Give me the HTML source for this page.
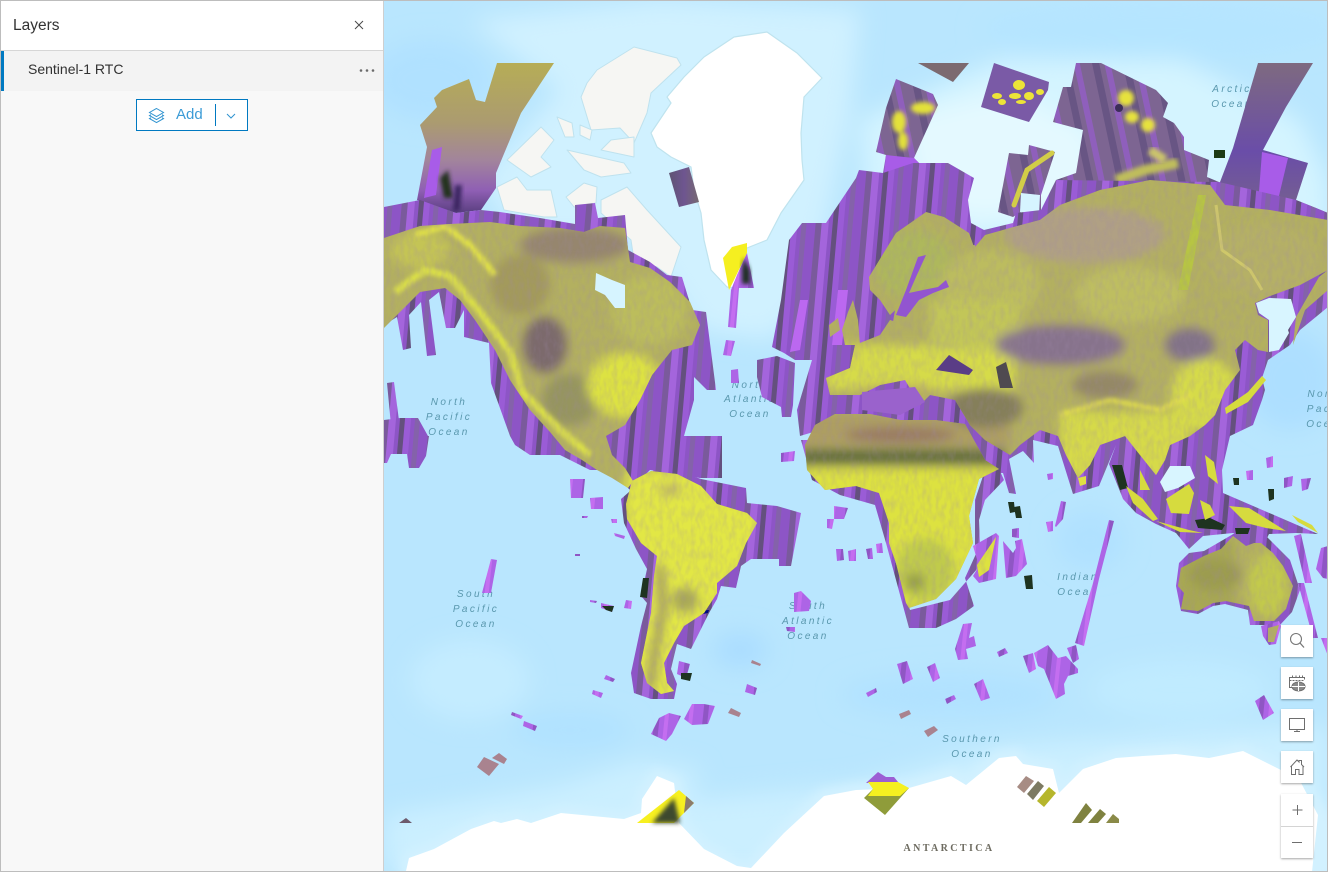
<!DOCTYPE html>
<html><head><meta charset="utf-8"><title>Layers</title>
<style>
*{box-sizing:border-box}
html,body{margin:0;padding:0;width:1328px;height:872px;overflow:hidden;background:#fff;font-family:"Liberation Sans",sans-serif}
#map{position:absolute;left:0;top:0;width:1328px;height:872px;display:block}
#panel{position:absolute;left:0;top:0;width:384px;height:872px;background:#f8f8f8;border-right:1px solid #cfcfcf}
#head{position:absolute;left:0;top:0;width:383px;height:51px;background:#fff;border-bottom:1px solid #d6d6d6}
#title{position:absolute;left:13px;top:17px;font-size:15.5px;line-height:18px;color:#323232}
#row{position:absolute;left:1px;top:51px;width:382px;height:40px;background:#f3f3f3;border-left:3px solid #0079c1}
#rowt{position:absolute;left:24px;top:10px;font-size:14px;line-height:17px;color:#323232}
#add{position:absolute;left:136px;top:99px;width:112px;height:32px;background:#fff;border:1px solid #0079c1}
#addt{position:absolute;left:39px;top:6px;font-size:15px;line-height:17px;color:#3b9bd6}
#div{position:absolute;left:78px;top:4px;width:1px;height:22px;background:#0079c1}
.b{position:absolute;left:1281px;width:32px;background:#fff;box-shadow:0 1px 2px rgba(0,0,0,.35)}
.b svg{position:absolute;left:0;top:0}
#frame{position:absolute;left:0;top:0;width:1328px;height:872px;border:1px solid #bdbdbd;pointer-events:none}
</style></head><body>
<svg id="map" viewBox="0 0 1328 872" xmlns="http://www.w3.org/2000/svg">
<defs>
<filter id="b12" x="-30%" y="-30%" width="160%" height="160%"><feGaussianBlur stdDeviation="12"/></filter>
<filter id="b5" x="-30%" y="-30%" width="160%" height="160%"><feGaussianBlur stdDeviation="5"/></filter>
<filter id="b2" x="-30%" y="-30%" width="160%" height="160%"><feGaussianBlur stdDeviation="2"/></filter>
<pattern id="pp" width="46" height="300" patternUnits="userSpaceOnUse" patternTransform="rotate(5)">
<rect width="46" height="300" fill="#8d55c6"/><rect x="4" width="6" height="300" fill="#7a5a9c"/><rect x="10" width="7" height="300" fill="#a465dc"/><rect x="21" width="5" height="300" fill="#64507e"/><rect x="26" width="6" height="300" fill="#9a5cd6"/><rect x="36" width="5" height="300" fill="#8462aa"/></pattern>
<pattern id="pm" width="24" height="200" patternUnits="userSpaceOnUse" patternTransform="rotate(6)">
<rect width="24" height="200" fill="#ad64e6"/><rect x="6" width="5" height="200" fill="#8f56c4"/><rect x="16" width="4" height="200" fill="#c46ef0"/></pattern>
<pattern id="pd" width="30" height="200" patternUnits="userSpaceOnUse" patternTransform="rotate(-12)">
<rect width="30" height="200" fill="#7d6592"/><rect x="5" width="7" height="200" fill="#685584"/><rect x="17" width="6" height="200" fill="#8f5fbc"/></pattern>
<linearGradient id="alaska" x1="0" y1="0" x2="0" y2="1"><stop offset="0" stop-color="#b6ad56"/><stop offset=".4" stop-color="#ab9b70"/><stop offset=".65" stop-color="#a2849c"/><stop offset=".85" stop-color="#8f5fb4"/><stop offset="1" stop-color="#5a3f80"/></linearGradient>
<linearGradient id="rarc" x1="0" y1="0" x2="0" y2="1"><stop offset="0" stop-color="#7e6a80"/><stop offset=".5" stop-color="#6a4da8"/><stop offset="1" stop-color="#7c6a82"/></linearGradient>
<linearGradient id="greysc" x1="0" y1="0" x2="1" y2="0"><stop offset="0" stop-color="#5f5472"/><stop offset=".5" stop-color="#6e5590"/><stop offset="1" stop-color="#776a70"/></linearGradient>
<clipPath id="land">
<polygon points="384,238 420,226 450,224 490,222 520,226 560,228 584,232 600,226 625,228 630,262 650,268 670,282 690,302 700,325 692,345 672,350 652,375 640,400 625,425 606,436 612,455 625,468 633,481 628,488 612,478 597,470 582,460 565,450 550,432 530,410 510,380 495,350 475,320 460,300 445,288 420,292 400,312 384,328"/>
<polygon points="632,481 651,471 677,474 701,486 717,504 747,513 757,523 746,543 737,566 717,583 717,593 704,613 684,626 674,643 664,663 667,683 674,691 661,694 647,683 641,663 647,633 651,613 654,576 657,556 641,543 627,519 626,504"/>
<polygon points="815,425 835,414 870,414 900,420 935,420 965,424 985,460 999,469 979,479 969,516 973,543 956,579 936,599 909,608 906,603 896,563 889,543 889,523 879,493 856,486 825,490 807,470 805,445"/>
<polygon points="869,277 896,233 926,212 944,217 969,233 974,247 959,253 925,257 915,290 906,300 890,315 880,300 870,290"/>
<polygon points="905,250 975,245 985,340 890,340"/>
<polygon points="925,258 959,255 975,247 985,235 1010,228 1040,220 1060,205 1100,190 1150,180 1210,185 1225,205 1270,210 1328,220 1328,270 1300,285 1270,296 1255,303 1258,315 1268,320 1268,352 1258,350 1245,340 1235,350 1240,370 1225,390 1215,415 1205,425 1190,436 1170,445 1165,460 1156,475 1140,455 1125,436 1100,445 1090,465 1078,478 1066,455 1058,436 1040,430 1020,445 1010,455 985,440 970,425 955,400 930,395 920,405 905,380 880,385 860,395 830,395 826,378 850,368 855,345 880,335 890,320 905,325 915,320 930,325 925,300"/>
<polygon points="842,330 848,312 853,300 858,320 860,345 845,345"/>
<polygon points="829,325 838,318 840,330 830,337"/>
<polygon points="1296,317 1319,277 1328,270 1328,290 1305,310 1293,345"/>
<polygon points="1181,568 1204,556 1221,549 1233,536 1246,546 1254,543 1261,543 1273,553 1283,566 1293,586 1286,609 1274,621 1254,621 1249,606 1226,601 1213,603 1198,611 1181,609 1184,593 1178,586"/>
<polygon points="996,537 989,570 979,577 977,565"/>
<polygon points="1268,628 1279,625 1274,642 1268,642"/>
</clipPath>
<filter id="noise" x="0" y="0" width="100%" height="100%"><feTurbulence type="fractalNoise" baseFrequency=".22 .1" numOctaves="2" seed="4"/><feColorMatrix values="0 0 0 0 .35  0 0 0 0 .25  0 0 0 0 .4  1.6 0 0 0 -.6"/></filter>
</defs>

<!-- ocean -->
<rect x="384" width="944" height="872" fill="#b9e6fe"/>
<g filter="url(#b12)">
<polygon points="470,20 660,0 860,10 850,110 810,300 770,340 700,330 640,240 520,240 480,180 560,90" fill="#d0f1ff"/>
<polygon points="860,120 1000,60 1180,60 1300,120 1328,180 1328,240 1000,240 870,260" fill="#d4f4ff"/>
<polygon points="905,115 1010,90 1090,130 1100,200 980,220 920,200" fill="#e4f9ff"/>
<polygon points="384,815 560,785 640,760 700,770 690,800 856,785 1000,745 1328,725 1328,872 384,872" fill="#cbefff"/>
<ellipse cx="430" cy="80" rx="60" ry="40" fill="#b0e1ff"/>
<ellipse cx="1160" cy="30" rx="180" ry="30" fill="#b5e5ff"/>
<ellipse cx="1290" cy="380" rx="45" ry="50" fill="#addfff"/>
<ellipse cx="740" cy="650" rx="28" ry="18" fill="#aaddff"/>
<ellipse cx="1090" cy="540" rx="35" ry="30" fill="#b0e1ff"/>
<ellipse cx="570" cy="730" rx="60" ry="18" fill="#b0e2ff"/>
<ellipse cx="950" cy="695" rx="110" ry="22" fill="#b1e2ff"/>
<ellipse cx="1180" cy="690" rx="90" ry="30" fill="#c0ebff"/>
<ellipse cx="470" cy="680" rx="60" ry="40" fill="#c4ecff"/>
</g>
<!-- ice -->
<g fill="#f6f6f3" stroke="#bfe2ee" stroke-width="1" stroke-linejoin="round">
<polygon points="597,70 634,47 677,58 681,65 651,93 647,113 634,143 620,128 591,130 581,97 587,83"/>
<polygon points="507,160 541,127 554,140 541,157 551,167 531,177"/>
<polygon points="497,187 517,177 527,190 551,190 557,217 544,217 504,210"/>
<polygon points="567,150 624,163 631,173 601,177 584,170"/>
<polygon points="601,200 627,187 647,210 681,247 671,277 657,267 634,260 631,240 601,213"/>
<polygon points="566,197 584,183 597,187 596,203 574,207"/>
<polygon points="601,150 634,157 634,137 611,140"/>
<polygon points="557,117 572,123 574,137 565,137"/>
<polygon points="580,125 592,130 590,140 580,135"/>
</g>
<polygon fill="#fff" stroke="#bfe3ee" stroke-width="1.2" stroke-linejoin="round" points="651,133 671,103 667,97 684,77 704,57 734,37 767,32 797,53 822,78 804,97 801,133 802,160 804,180 781,213 767,240 747,248 737,288 727,287 711,270 704,240 701,213 694,190 691,167 671,157 657,147"/>
<!-- Antarctica -->
<polygon fill="#d2f1ff" stroke="#d2f1ff" stroke-width="14" stroke-linejoin="round" filter="url(#b5)" points="406,871 409,858 434,849 471,829 494,821 501,823 517,819 531,823 561,813 624,819 641,813 642,799 657,776 674,783 679,823 704,849 737,866 751,868 784,833 824,796 856,790 909,788 951,776 966,785 999,758 1016,756 1023,764 1053,769 1059,793 1083,769 1116,758 1143,756 1176,754 1209,758 1243,751 1273,766 1299,779 1328,823 1328,872"/>
<polygon fill="#fff" points="406,871 409,858 434,849 471,829 494,821 501,823 517,819 531,823 561,813 624,819 641,813 642,799 657,776 674,783 679,823 704,849 737,866 751,868 784,833 824,796 856,790 909,788 951,776 966,785 999,758 1016,756 1023,764 1053,769 1059,793 1083,769 1116,758 1143,756 1176,754 1209,758 1243,751 1273,766 1299,779 1318,815 1312,872"/>
<!-- labels -->
<g font-family="'Liberation Sans',sans-serif" font-style="italic" font-size="10" letter-spacing="2.4" fill="#5a98ae" text-anchor="middle">
<text x="449" y="405">North</text><text x="449" y="420">Pacific</text><text x="449" y="435">Ocean</text>
<text x="1232" y="92">Arctic</text><text x="1232" y="107">Ocean</text>
<text x="750" y="388">North</text><text x="750" y="402">Atlantic</text><text x="750" y="417">Ocean</text>
<text x="476" y="597">South</text><text x="476" y="612">Pacific</text><text x="476" y="627">Ocean</text>
<text x="808" y="609">South</text><text x="808" y="624">Atlantic</text><text x="808" y="639">Ocean</text>
<text x="1078" y="580">Indian</text><text x="1078" y="595">Ocean</text>
<text x="972" y="742">Southern</text><text x="972" y="757">Ocean</text>
<text x="1319" y="397">Nor</text><text x="1319" y="412">Pac</text><text x="1319" y="427">Oce</text>
</g>
<text x="949" y="851" text-anchor="middle" font-family="'Liberation Serif',serif" font-size="10" font-weight="700" letter-spacing="2.4" fill="#6d6b60">ANTARCTICA</text>

<!-- arctic scenes -->
<polygon fill="url(#alaska)" points="497,63 554,63 521,113 496,173 496,188 481,210 456,213 417,200 427,147 420,125 437,107 434,98 442,90 469,79 476,100 485,102"/>
<polygon fill="#a85ce8" points="432,150 442,147 436,195 424,198"/>
<polygon fill="#24331c" filter="url(#b2)" points="440,178 448,170 453,198 444,198"/>
<polygon fill="#3a2860" filter="url(#b2)" points="455,185 462,185 460,210 453,212"/>
<polygon fill="url(#greysc)" points="669,173 689,167 699,202 679,207"/>
<polygon fill="#f5ef20" points="732,247 747,243 747,253 734,280 729,290 723,258"/>
<polygon fill="url(#pm)" points="747,253 754,288 739,288 736,328 728,327 731,290 737,275"/>
<polygon fill="#1f2d22" filter="url(#b2)" points="744,258 750,270 750,284 742,284 742,268"/>
<polygon fill="#7c6a70" points="918,63 969,63 953,82"/>
<polygon fill="url(#pd)" points="896,79 933,94 938,105 914,158 919,163 911,167 884,175 883,173 886,155 876,152 886,108"/>
<polygon fill="#a85ce8" points="886,155 914,158 919,163 911,167 884,175"/>
<g fill="#e3e13a" filter="url(#b2)"><ellipse cx="923" cy="108" rx="12" ry="6"/><ellipse cx="899" cy="122" rx="7" ry="11"/><ellipse cx="903" cy="141" rx="5" ry="9"/></g>
<polygon fill="#7a5aa6" points="994,63 1049,82 1048,90 1029,122 981,107"/>
<g fill="#ece438"><ellipse cx="1019" cy="85" rx="6" ry="5"/><ellipse cx="1029" cy="96" rx="5" ry="4"/><ellipse cx="1040" cy="92" rx="4" ry="3"/><ellipse cx="1015" cy="96" rx="6" ry="3"/><ellipse cx="997" cy="96" rx="5" ry="3"/><ellipse cx="1002" cy="102" rx="4" ry="3"/><ellipse cx="1021" cy="102" rx="5" ry="2"/></g>
<polygon fill="url(#pd)" points="1009,153 1028,155 1029,145 1055,152 1041,195 1041,212 1021,212 1013,217 998,212"/>
<polyline fill="none" stroke="#d2cd48" stroke-width="5" stroke-linecap="round" points="1052,153 1027,170 1014,205"/>
<polygon fill="#d6f4ff" points="1021,193 1040,195 1039,214 1020,212"/>
<polygon fill="url(#pd)" points="1076,63 1101,63 1156,90 1168,103 1163,117 1174,123 1184,137 1184,150 1209,160 1207,177 1219,182 1219,215 1056,215 1056,180 1076,173 1083,130 1053,122 1063,87 1071,87"/>
<g fill="#e6e23c" filter="url(#b2)"><ellipse cx="1126" cy="98" rx="8" ry="8"/><ellipse cx="1132" cy="117" rx="7" ry="6"/><ellipse cx="1148" cy="125" rx="7" ry="7"/></g>
<circle cx="1119" cy="108" r="4" fill="#3c2d58"/>
<polyline fill="none" stroke="#bfbe5c" stroke-width="10" filter="url(#b2)" points="1116,180 1145,170 1178,163"/>
<polyline fill="none" stroke="#cbc56a" stroke-width="9" filter="url(#b2)" points="1150,150 1165,160"/>
<polygon fill="url(#rarc)" points="1258,63 1313,63 1286,107 1263,150 1308,163 1296,200 1316,208 1328,213 1328,240 1220,240 1220,182 1233,148"/>
<polygon fill="#a85ce8" points="1262,152 1288,158 1278,200 1258,205"/>
<rect x="1214" y="150" width="11" height="8" fill="#1c3a14"/>
<!-- purple -->
<g fill="url(#pp)">
<polygon points="384,207 420,200 456,213 481,210 500,212 540,218 575,224 575,205 595,203 598,218 625,215 628,250 650,262 667,275 682,277 692,310 706,312 716,390 707,390 694,377 694,400 684,436 722,436 722,478 700,478 650,470 630,490 610,470 590,470 560,455 530,455 515,445 510,436 491,383 489,343 464,337 464,310 455,328 446,328 439,292 429,300 436,355 427,356 421,302 409,315 411,348 403,350 397,317 384,325"/>
<polygon points="387,383 394,382 401,436 392,436"/>
<polygon points="386,436 429,436 426,456 419,468 409,468 407,454 391,454 387,463 384,463 384,420 400,418 418,418 428,436"/>
<polygon points="384,295 395,293 400,315 384,320"/>
<polygon points="757,360 777,356 795,363 793,405 791,417 782,417 781,407 762,397 757,377"/>
<polygon points="701,479 746,488 747,503 777,506 801,513 791,566 779,566 779,559 751,559 741,566 736,588 721,586 717,599 709,613 691,649 677,644 671,669 677,684 674,699 651,699 634,693 631,673 641,626 647,603 641,596 647,569 636,549 624,523 621,499 660,465"/>
<polygon points="772,347 781,300 789,240 802,223 826,223 856,178 859,170 883,173 913,163 948,163 974,178 968,200 971,223 984,230 1013,223 1016,213 1041,210 1056,180 1219,182 1296,200 1316,208 1328,213 1328,307 1300,330 1290,345 1268,360 1262,378 1265,390 1262,400 1253,425 1230,436 1222,470 1223,493 1318,534 1296,533 1269,534 1263,546 1248,536 1233,533 1203,536 1189,549 1176,533 1156,524 1136,513 1123,499 1109,464 1116,445 1099,486 1073,494 1058,446 1033,440 1034,463 1023,451 1009,459 1016,494 1009,493 1003,473 986,473 966,445 950,425 900,420 860,418 800,436 797,410 812,360 795,360 784,353 772,347"/>
<polygon points="801,440 880,440 889,500 889,540 910,610 950,600 985,560 975,545 975,500 985,470 999,469 1004,480 985,500 979,520 980,545 965,578 974,606 956,619 936,628 909,628 886,543 875,505 840,495 812,480"/>
<polygon points="1176,586 1179,563 1189,553 1204,551 1223,540 1240,530 1260,530 1290,560 1300,590 1292,612 1280,625 1250,625 1248,610 1225,604 1213,606 1198,614 1181,611"/>
</g>
<polygon fill="#d8f5ff" points="1160,482 1170,466 1190,466 1195,478 1178,488 1165,492"/>
<g fill="url(#pm)">
<polygon points="1261,626 1279,621 1281,626 1276,644 1269,645 1263,636"/>
<polygon points="726,340 735,341 731,356 723,355"/>
<polygon points="973,546 996,533 999,536 996,579 979,583 973,576 979,566"/>
<polygon points="1003,541 1013,553 1016,548 1015,541 1022,539 1027,564 1016,576 1006,578"/>
<polygon points="963,624 972,623 969,638 974,636 976,646 966,649 968,659 958,660 955,649"/>
<polygon points="897,664 907,661 913,679 903,684"/><polygon points="927,667 935,663 940,678 933,682"/><polygon points="974,684 983,679 990,698 981,701"/>
<polygon points="1023,656 1033,653 1036,669 1029,673"/>
<polygon points="1034,653 1048,645 1058,658 1066,656 1078,669 1078,673 1068,676 1064,684 1065,694 1056,699 1044,669 1038,666"/>
<polygon points="1067,648 1076,645 1079,659 1073,663"/>
<polygon points="1109,520 1114,521 1099,579 1084,646 1075,643 1093,583"/>
<polygon points="1061,501 1066,502 1063,519 1056,527 1055,526"/>
<polygon points="1255,701 1264,695 1274,713 1263,720"/>
<polygon points="1284,478 1293,476 1292,486 1284,488"/><polygon points="1301,479 1311,478 1308,489 1302,491"/><polygon points="1266,458 1273,456 1273,467 1267,468"/><polygon points="1246,471 1253,470 1253,480 1247,480"/>
<polygon points="1294,536 1301,534 1312,583 1305,583"/><polygon points="1298,583 1304,583 1318,638 1313,638"/><polygon points="1316,569 1321,548 1328,546 1328,579 1323,578"/><polygon points="1321,638 1328,638 1328,656"/>
<polygon points="1046,522 1053,521 1053,531 1048,532"/><polygon points="1012,529 1019,528 1019,538 1012,537"/><polygon points="1047,474 1053,473 1053,479 1048,480"/>
<polygon points="570,479 585,479 583,498 571,498"/><polygon points="590,498 603,497 603,509 591,509"/><polygon points="611,519 617,519 617,523 612,523"/><polygon points="614,533 625,536 624,539 615,536"/><polygon points="582,516 588,516 587,518 582,518"/><polygon points="575,554 580,554 580,556 575,556"/>
<polygon points="491,559 497,560 491,593 482,593"/><polygon points="601,603 614,606 612,612 601,608"/><polygon points="626,600 632,601 631,609 624,608"/><polygon points="590,600 597,601 596,603 590,602"/>
<polygon points="606,675 615,679 613,682 604,679"/><polygon points="593,690 603,693 601,698 592,694"/><polygon points="512,712 523,716 521,719 511,715"/><polygon points="524,721 537,726 535,731 523,726"/>
<polygon points="659,718 669,713 681,716 672,734 666,741 651,734"/><polygon points="692,704 704,704 715,706 708,724 692,725 684,719"/><polygon points="747,684 757,688 755,695 745,692"/>
<polygon points="679,661 690,664 686,678 677,674"/><polygon points="794,593 801,591 811,601 809,611 794,612"/><polygon points="786,627 795,627 795,632 787,631"/>
<polygon points="781,453 795,451 794,461 781,462"/><polygon points="836,549 843,549 844,560 837,561"/><polygon points="848,551 856,549 856,561 849,561"/><polygon points="834,506 848,508 844,519 834,519"/><polygon points="827,519 834,519 832,529 827,528"/>
<polygon points="866,549 872,548 873,559 868,559"/><polygon points="876,544 882,543 883,553 877,553"/><polygon points="866,693 876,688 877,692 868,697"/><polygon points="945,699 954,695 956,699 947,704"/><polygon points="997,652 1005,648 1008,653 999,657"/>
<polygon points="731,370 738,369 739,383 731,383"/>
</g>
<polygon fill="#bb68f0" points="800,300 808,300 800,350 790,352"/>
<polygon fill="#bb68f0" points="838,290 848,290 842,345 832,345"/>
<g fill="#1e3320"><polygon points="1008,502 1014,502 1015,512 1010,513"/><polygon points="1014,507 1020,506 1022,518 1016,518"/><polygon points="1024,576 1032,575 1033,589 1026,589"/><polygon points="1268,489 1274,489 1274,499 1269,501"/><polygon points="1233,478 1239,478 1239,485 1234,485"/><polygon points="681,673 692,673 690,681 681,679"/><polygon points="643,578 649,578 647,598 640,597"/><polygon points="602,606 614,606 612,612 606,610"/><polygon points="1195,520 1210,518 1225,525 1222,530 1198,528"/><polygon points="1235,528 1250,528 1248,534 1236,534"/><polygon points="1112,465 1122,465 1128,488 1120,490"/></g>
<g fill="#a9838f"><polygon points="492,758 499,753 507,759 504,764"/><polygon points="484,757 499,764 489,776 477,767"/><polygon points="731,708 741,713 739,717 728,713"/><polygon points="752,660 761,664 760,666 751,663"/><polygon points="899,714 909,710 911,714 901,719"/><polygon points="924,731 934,726 938,730 928,737"/></g>
<polygon fill="#000b80" points="696,611 709,610 708,613 698,615"/>
<!-- Land -->
<g clip-path="url(#land)">
<rect x="384" y="150" width="944" height="560" fill="#b3b060"/>
<g filter="url(#b5)">
<!-- N America -->
<ellipse cx="575" cy="245" rx="55" ry="18" fill="#96866e"/>
<ellipse cx="545" cy="345" rx="22" ry="28" fill="#7c6b6c"/>
<ellipse cx="570" cy="400" rx="28" ry="26" fill="#96955e"/>
<ellipse cx="520" cy="285" rx="30" ry="30" fill="#a39a5c"/>
<ellipse cx="625" cy="385" rx="38" ry="32" fill="#dde242"/>
<ellipse cx="650" cy="310" rx="38" ry="35" fill="#bcbd5c"/>
<ellipse cx="420" cy="250" rx="30" ry="18" fill="#c4c454"/>
<!-- Africa -->
<rect x="805" y="468" width="200" height="140" fill="#dde23f"/>
<rect x="800" y="449" width="205" height="16" fill="#66703c"/>
<rect x="800" y="414" width="210" height="32" fill="#ad9e62"/>
<ellipse cx="925" cy="570" rx="30" ry="32" fill="#c0cb4b"/>
<ellipse cx="915" cy="582" rx="10" ry="9" fill="#96a044"/>
<ellipse cx="900" cy="435" rx="55" ry="8" fill="#9a7c64"/>
<!-- South America -->
<rect x="625" y="470" width="135" height="240" fill="#e2e744"/>
<ellipse cx="670" cy="490" rx="12" ry="6" fill="#bdb462"/>
<ellipse cx="685" cy="600" rx="14" ry="13" fill="#a9a858"/>
<polyline fill="none" stroke="#958864" stroke-width="8" points="660,565 663,610 655,650 650,690"/>
<!-- Eurasia -->
<ellipse cx="915" cy="265" rx="40" ry="35" fill="#aeb85c"/>
<ellipse cx="990" cy="285" rx="50" ry="35" fill="#bcbc5e"/>
<rect x="825" y="345" width="190" height="45" fill="#d6db4a"/>
<rect x="930" y="300" width="90" height="50" fill="#c2c658"/>
<ellipse cx="1085" cy="235" rx="80" ry="28" fill="#b0a084"/>
<ellipse cx="1060" cy="345" rx="65" ry="20" fill="#7f6894" opacity=".85"/>
<ellipse cx="1190" cy="345" rx="25" ry="17" fill="#7a688e" opacity=".85"/>
<ellipse cx="1130" cy="295" rx="55" ry="28" fill="#bebe60"/>
<ellipse cx="1265" cy="260" rx="55" ry="35" fill="#b5b066"/>
<ellipse cx="1205" cy="395" rx="34" ry="36" fill="#d6db48"/>
<ellipse cx="1105" cy="385" rx="33" ry="14" fill="#948866"/>
<rect x="1060" y="412" width="130" height="70" fill="#d6da48"/>
<ellipse cx="985" cy="408" rx="38" ry="20" fill="#857f5a"/>
<ellipse cx="895" cy="390" rx="40" ry="6" fill="#bab05c"/>
<!-- Australia -->
<ellipse cx="1268" cy="585" rx="20" ry="32" fill="#c3ca4c"/>
<ellipse cx="1215" cy="575" rx="26" ry="16" fill="#96915a"/>
<rect x="1175" y="540" width="60" height="80" fill="#a0a448" opacity=".6"/>
</g>
<polyline fill="none" stroke="#dbe046" stroke-width="7" filter="url(#b2)" points="395,292 425,270 450,276 480,312 510,352 522,392 560,430 590,455"/>
<polyline fill="none" stroke="#e2e246" stroke-width="6" filter="url(#b2)" points="415,235 445,226 470,245 495,275"/>
<polygon fill="#b7c543" points="1198,195 1206,195 1188,290 1178,290"/>
<polyline fill="none" stroke="#e4e04c" stroke-width="4" filter="url(#b2)" points="1060,415 1110,400 1160,410 1190,395"/>
<polyline fill="none" stroke="#cfc86a" stroke-width="3" points="1216,205 1222,250 1250,270 1262,290"/>
<rect x="384" y="150" width="944" height="560" filter="url(#noise)" opacity=".3"/>
</g>
<!-- seas -->
<polygon fill="#d6f4ff" points="596,273 612,280 625,285 625,308 615,308 605,295 595,290"/>
<polygon fill="#d8f5ff" points="1256,303 1269,298 1291,299 1296,317 1288,330 1289,333 1279,350 1269,352 1269,320 1259,313"/>
<polygon fill="#5a3d86" points="936,370 949,355 973,370 969,375"/>
<polygon fill="#4f4a50" points="996,367 1006,362 1013,388 1000,388"/>
<polygon fill="#9255d0" points="906,290 918,257 926,255 916,277 909,293 923,290 938,287 946,280 949,287 933,293 919,300 906,317 896,315"/>
<polygon fill="#9a62cc" points="862,392 915,387 925,402 900,415 862,410"/>
<!-- Japan, Indonesia -->
<g fill="#d6db3e"><polygon points="1225,408 1248,392 1262,376 1266,380 1248,402 1226,414"/><polygon points="1126,486 1143,499 1158,519 1153,521 1133,503"/><polygon points="1166,499 1189,484 1194,493 1189,514 1171,513"/><polygon points="1200,500 1210,505 1215,515 1205,520"/><polygon points="1156,521 1189,530 1203,533 1180,532"/><polygon points="1229,506 1249,508 1286,531 1266,528 1246,523"/><polygon points="1140,470 1150,490 1140,490"/><polygon points="1205,455 1214,462 1218,484 1208,476"/><polygon points="1292,515 1312,525 1318,533 1298,522"/></g>
<polygon fill="#dfe044" points="1078,478 1086,476 1086,484 1080,486"/>
<!-- Antarctic scenes -->
<polygon fill="#f7f020" points="637,823 679,790 694,803 674,823"/>
<polygon fill="#3d4a2e" filter="url(#b2)" points="652,823 674,798 680,823"/>
<polygon fill="#8c7c6c" points="686,796 694,803 684,813"/>
<polygon fill="#6d5a6c" points="399,823 406,818 412,823"/>
<polygon fill="#8f9c3a" points="864,798 873,789 909,788 885,815"/>
<polygon fill="#9c5fd4" points="866,783 878,772 886,777 894,777 898,782 868,783"/>
<polygon fill="#f5f020" points="868,782 898,782 909,788 900,796 868,796 873,789"/>
<polygon fill="#a78c84" points="1026,776 1034,781 1024,793 1017,787"/>
<polygon fill="#7d7a62" points="1038,781 1044,786 1033,800 1027,794"/>
<polygon fill="#b6b62c" points="1049,787 1056,793 1044,807 1037,801"/>
<polygon fill="#7f8240" points="1086,803 1092,810 1081,823 1072,823"/>
<polygon fill="#7f8240" points="1100,809 1106,814 1098,823 1088,823"/>
<polygon fill="#8a8a48" points="1113,814 1119,819 1119,823 1106,823"/>
</svg>

<div id="panel">
<div id="head"><div id="title">Layers</div>
<svg style="position:absolute;left:352px;top:18px" width="14" height="14" viewBox="0 0 14 14"><path d="M3 3l8 8M11 3l-8 8" stroke="#4a4a4a" stroke-width="1" fill="none"/></svg></div>
<div id="row"><div id="rowt">Sentinel-1 RTC</div>
<svg style="position:absolute;left:355px;top:17px" width="16" height="5" viewBox="0 0 16 5"><circle cx="2" cy="2.500" r="1.300" fill="#6a6a6a"/><circle cx="8" cy="2.500" r="1.300" fill="#6a6a6a"/><circle cx="14" cy="2.500" r="1.300" fill="#6a6a6a"/></svg></div>
<div id="add">
<svg style="position:absolute;left:11px;top:7px" width="17" height="17" viewBox="0 0 17 17" fill="none" stroke="#2f93d0" stroke-width="1"><path d="M8.500 1.500L15.500 5.500 8.500 9.500 1.500 5.500z"/><path d="M3 7.700L1.500 8.600l7 4 7-4-1.500-.9"/><path d="M3 10.700L1.500 11.600l7 4 7-4-1.500-.9"/></svg>
<div id="addt">Add</div><div id="div"></div>
<svg style="position:absolute;left:89px;top:11px" width="10" height="10" viewBox="0 0 10 10"><path d="M1 3l4 4 4-4" stroke="#2f93d0" stroke-width="1" fill="none"/></svg>
</div>
</div>

<div class="b" style="top:625px;height:32px"><svg width="32" height="32" fill="none" stroke="#767676"><circle cx="15" cy="14" r="5.500" stroke-width="1.100"/><path d="M19 18l4 4.500" stroke-width="1.300"/></svg></div>
<div class="b" style="top:667px;height:32px"><svg width="32" height="32" fill="none" stroke="#6e6e6e" stroke-width="1"><path d="M11 20.500H8.500V10.500h15v2"/><path d="M8.500 13.500h15M11.500 8.500v3M15 8.500v3M18.500 8.500v3M21.500 8.500v3" stroke-dasharray="2 1"/><ellipse cx="17.500" cy="19.500" rx="6.500" ry="4.500" fill="#8a8a8a"/><path d="M17.500 15v9M11 19.500h13" stroke="#fff"/></svg></div>
<div class="b" style="top:709px;height:32px"><svg width="32" height="32" fill="none" stroke="#6e6e6e" stroke-width="1"><rect x="8.500" y="9.500" width="15" height="11"/><path d="M16 20.500v2M13 22.500h6"/></svg></div>
<div class="b" style="top:751px;height:32px"><svg width="32" height="32" fill="none" stroke="#6e6e6e" stroke-width="1"><path d="M9.500 16L16 9l2 2v-1.500h2.500V13.500L23 16"/><path d="M10.500 15v8.500h4v-5h3.500v5h4V15"/></svg></div>
<div class="b" style="top:794px;height:64px"><svg width="32" height="64" fill="none" stroke="#6e6e6e" stroke-width="1"><path d="M16.500 11v10M11.500 16h10"/><path d="M0 32.500h32" stroke="#d4d4d4"/><path d="M11 48.500h10"/></svg></div>
<div id="frame"></div>
</body></html>
